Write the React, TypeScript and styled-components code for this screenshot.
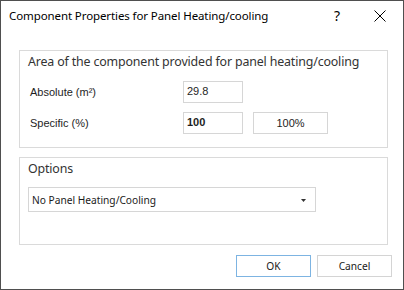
import React from "react";
import styled, { createGlobalStyle } from "styled-components";

const Global = createGlobalStyle`
  html, body { margin: 0; padding: 0; background: #ffffff; }
  * { box-sizing: border-box; }
`;

const UI = `"Noto Sans", "Open Sans", sans-serif`;
const TAHOMA = `"Liberation Sans", Arial, sans-serif`;

const Window = styled.div`
  width: 404px;
  height: 290px;
  border: 1px solid #4f4f4f;
  background: #ffffff;
  display: flex;
  flex-direction: column;
  color: #1b1b1b;
`;

const TitleBar = styled.div`
  height: 29px;
  display: flex;
  align-items: center;
  padding-left: 8px;
  font-family: ${UI};
  font-size: 11.5px;
  letter-spacing: -0.1px;
  color: #000;
`;

const TitleText = styled.div`
  flex: 1;
`;

const TitleButton = styled.div<{ $w: number }>`
  width: ${(p) => p.$w}px;
  height: 29px;
  display: flex;
  align-items: center;
  justify-content: center;
  font-family: ${UI};
  font-size: 14px;
  color: #000;
`;

const Content = styled.div`
  flex: 1;
  display: flex;
  flex-direction: column;
  padding: 20px 15px 0 18px;
`;

const Group = styled.div<{ $h: number; $mt?: number }>`
  height: ${(p) => p.$h}px;
  margin-top: ${(p) => p.$mt ?? 0}px;
  border: 1px solid #dadada;
  padding: 2px 10px 0 8px;
  display: flex;
  flex-direction: column;
`;

const GroupTitle = styled.div`
  font-family: ${UI};
  font-size: 12.4px;
  line-height: 17px;
  color: #333;
  letter-spacing: -0.15px;
`;

const Grid = styled.div`
  display: grid;
  grid-template-columns: 145px 60px 75px;
  column-gap: 10px;
  row-gap: 9px;
  margin-top: 11px;
  align-items: center;
`;

const Label = styled.div`
  font-family: ${TAHOMA};
  font-size: 11px;
  color: #1e1e1e;
  padding-left: 2px;
`;

const Field = styled.div<{ $bold?: boolean }>`
  height: 22px;
  border: 1px solid #d6d6d6;
  padding: 2px 3px 0;
  font-family: ${TAHOMA};
  font-size: 11px;
  line-height: 14px;
  font-weight: ${(p) => (p.$bold ? 700 : 400)};
  color: #1e1e1e;
`;

const SmallButton = styled.div`
  height: 22px;
  border: 1px solid #d6d6d6;
  display: flex;
  align-items: center;
  justify-content: center;
  font-family: ${TAHOMA};
  font-size: 11px;
  color: #1e1e1e;
`;

const Select = styled.div`
  margin-top: 10px;
  width: 288px;
  height: 25px;
  border: 1px solid #d6d6d6;
  display: flex;
  align-items: center;
  padding: 0 9px 0 3px;
  font-family: ${UI};
  font-size: 10.2px;
  color: #1b1b1b;
`;

const SelectText = styled.div`
  flex: 1;
`;

const Caret = styled.svg`
  margin-top: 2px;
`;

const Footer = styled.div`
  display: flex;
  justify-content: flex-end;
  gap: 6px;
  margin-top: 10px;
  margin-right: -4px;
`;

const DialogButton = styled.div<{ $default?: boolean }>`
  width: 75px;
  height: 22px;
  border: 1px solid ${(p) => (p.$default ? "#7db4e2" : "#d4d4d4")};
  display: flex;
  align-items: center;
  justify-content: center;
  font-family: ${UI};
  font-size: 10.2px;
  color: #1b1b1b;
`;

export default function App() {
  return (
    <>
      <Global />
      <Window>
        <TitleBar>
          <TitleText>Component Properties for Panel Heating/cooling</TitleText>
          <TitleButton $w={40}>?</TitleButton>
          <TitleButton $w={46}>
            <svg width="12" height="12" viewBox="0 0 12 12">
              <path d="M0.5 0.5 L11.5 11.5 M11.5 0.5 L0.5 11.5" stroke="#000" strokeWidth="1" />
            </svg>
          </TitleButton>
        </TitleBar>
        <Content>
          <Group $h={98}>
            <GroupTitle>Area of the component provided for panel heating/cooling</GroupTitle>
            <Grid>
              <Label>Absolute (m²)</Label>
              <Field>29.8</Field>
              <div />
              <Label>Specific (%)</Label>
              <Field $bold>100</Field>
              <SmallButton>100%</SmallButton>
            </Grid>
          </Group>
          <Group $h={88} $mt={9}>
            <GroupTitle>Options</GroupTitle>
            <Select>
              <SelectText>No Panel Heating/Cooling</SelectText>
              <Caret width="5" height="3" viewBox="0 0 5 3">
                <path d="M0 0 H5 L2.5 3 Z" fill="#333" />
              </Caret>
            </Select>
          </Group>
          <Footer>
            <DialogButton $default>OK</DialogButton>
            <DialogButton>Cancel</DialogButton>
          </Footer>
        </Content>
      </Window>
    </>
  );
}
